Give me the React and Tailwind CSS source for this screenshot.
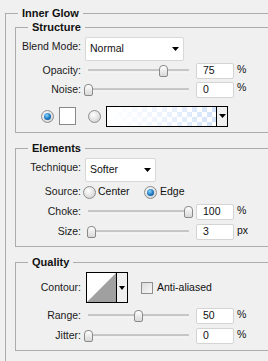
import React from 'react';

const font = { fontFamily: '"Liberation Sans", Arial, sans-serif' };

const Radio = ({ checked }) => (
  <div className="w-[13px] h-[13px] rounded-full border border-[#8e8e8e] bg-[radial-gradient(circle_at_40%_35%,#ffffff,#d4d4d4_80%)] flex items-center justify-center shrink-0">
    {checked && (
      <div className="w-[7px] h-[7px] rounded-full bg-[radial-gradient(circle_at_40%_35%,#8ad6ff,#1a74be_55%,#0b4f8a)]" />
    )}
  </div>
);

const Slider = ({ value }) => (
  <div className="relative w-[107px] h-full ml-[4px] shrink-0">
    <div className="absolute left-[3px] top-1/2 -translate-y-1/2 w-[101px] h-[3px] bg-[#e2e2e2] border-t border-t-[#a8a8a8] border-b border-b-white" />
    <div
      className="absolute top-1/2 -translate-y-1/2 w-[9px] h-[12px] rounded-t-[4px] rounded-b-[2px] border border-[#8a8a8a] bg-linear-to-b from-white to-[#d8d8d8]"
      style={{ left: 3 + value - 4.5 }}
    />
  </div>
);

const NumBox = ({ value, unit }) => (
  <>
    <div className="ml-[4px] w-[38px] h-[16px] bg-white border border-[#d4d4d4] rounded-[2px] pl-[6px] flex items-center text-[10.5px] text-[#111]">
      {value}
    </div>
    <span className="ml-[3px] text-[10.5px] text-[#111] -mt-[3px]">{unit}</span>
  </>
);

const Label = ({ children, className = '' }) => (
  <div className={`w-[65px] text-right text-[10.5px] text-[#1a1a1a] shrink-0 ${className}`}>{children}</div>
);

const SliderRow = ({ label, value, unit = '%', className }) => (
  <div className={`flex items-center ${className}`}>
    <Label>{label}</Label>
    <Slider value={value} />
    <NumBox value={value} unit={unit} />
  </div>
);

const Dropdown = ({ text, className }) => (
  <div className={`ml-[4px] h-[24px] bg-white border border-[#d8d8d8] rounded-[2px] flex items-center justify-between pl-[4px] pr-[4px] text-[10.5px] text-[#111] ${className}`}>
    <span>{text}</span>
    <svg width="7" height="4" viewBox="0 0 7 4"><polygon points="0,0 7,0 3.5,4" fill="#000" /></svg>
  </div>
);

const Group = ({ title, className = '', children }) => (
  <fieldset className={`border border-[#acacac] w-[270px] ml-[9px] ${className}`}>
    <legend className="ml-[12px] px-[4px] text-[11px] font-bold leading-[14px] text-[#111]">{title}</legend>
    {children}
  </fieldset>
);

export default function App() {
  return (
    <div className="w-[268px] h-[361px] overflow-hidden bg-[#f0f0f0]" style={font}>
      <fieldset className="border border-[#acacac] w-[290px] h-[400px] ml-[5px] mt-[6px]">
        <legend className="ml-[12px] px-[4px] text-[11px] font-bold leading-[14px] text-[#111]">Inner Glow</legend>

        <Group title="Structure" className="pb-[5px]">
          <div className="flex items-center mt-[3px] h-[24px]">
            <Label className="mb-[4px]">Blend Mode:</Label>
            <Dropdown text="Normal" className="w-[99px]" />
          </div>
          <SliderRow label="Opacity:" value={75} className="mt-[1px] h-[18px]" />
          <SliderRow label="Noise:" value={0} className="h-[19px]" />
          <div className="flex items-center mt-[6px] h-[22px] pl-[25px]">
            <Radio checked />
            <div className="ml-[5px] w-[17px] h-[18px] bg-white border border-[#8a8a8a]" />
            <div className="ml-[12px]"><Radio /></div>
            <div className="ml-[5px] w-[122px] h-[21px] border border-black flex">
              <div className="flex-1 bg-[conic-gradient(#d3e3fa_25%,#fff_0_50%,#d3e3fa_0_75%,#fff_0)] bg-size-[10px_10px]">
                <div className="w-full h-full bg-linear-to-r from-white via-white/60 to-white/0" />
              </div>
              <div className="w-[11px] border-l border-black bg-[#f0f0f0] flex items-center justify-center">
                <svg width="7" height="4" viewBox="0 0 7 4"><polygon points="0,0 7,0 3.5,4" fill="#000" /></svg>
              </div>
            </div>
          </div>
        </Group>

        <Group title="Elements" className="mt-[8px] pb-[4px]">
          <div className="flex items-center mt-[3px] h-[24px]">
            <Label className="mb-[4px]">Technique:</Label>
            <Dropdown text="Softer" className="w-[71px]" />
          </div>
          <div className="flex items-center h-[20px] text-[10.5px] text-[#111]">
            <Label>Source:</Label>
            <div className="ml-[2px] w-[61px] flex items-center">
              <Radio />
              <span className="ml-[2px]">Center</span>
            </div>
            <Radio checked />
            <span className="ml-[3px]">Edge</span>
          </div>
          <SliderRow label="Choke:" value={100} className="h-[20px]" />
          <SliderRow label="Size:" value={3} unit="px" className="h-[20px]" />
        </Group>

        <Group title="Quality" className="mt-[8px] pb-[4px]">
          <div className="flex items-center mt-[3px] h-[31px]">
            <Label>Contour:</Label>
            <div className="ml-[5px] w-[42px] h-[31px] border border-black flex">
              <svg className="block bg-white" width="29" height="29" viewBox="0 0 29 29">
                <polygon points="0,29 29,0 29,29" fill="#a0a0a0" />
              </svg>
              <div className="flex-1 border-l border-black bg-[#f0f0f0] flex items-center justify-center">
                <svg width="6" height="4" viewBox="0 0 6 4"><polygon points="0,0 6,0 3,4" fill="#000" /></svg>
              </div>
            </div>
            <div className="ml-[13px] w-[12px] h-[12px] border border-[#8e8f8f] bg-linear-to-br from-[#dcdcdc] to-[#f8f8f8]" />
            <span className="ml-[4px] text-[10.5px] text-[#111]">Anti-aliased</span>
          </div>
          <SliderRow label="Range:" value={50} className="mt-[3px] h-[20px]" />
          <SliderRow label="Jitter:" value={0} className="h-[20px]" />
        </Group>
      </fieldset>
    </div>
  );
}
